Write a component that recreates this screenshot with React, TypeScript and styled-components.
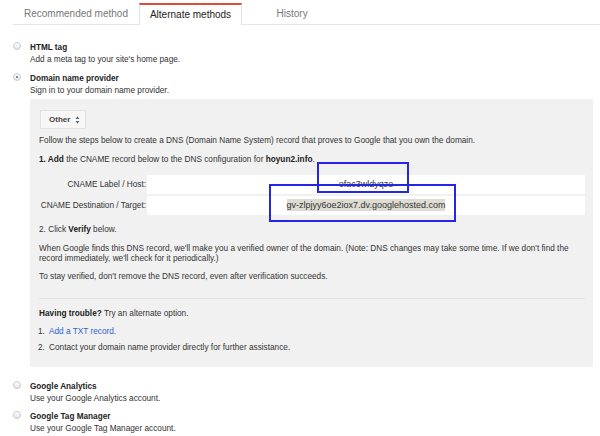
import React from "react";
import styled, { createGlobalStyle, css } from "styled-components";

const Global = createGlobalStyle`
  html, body { margin: 0; padding: 0; background: #fff; }
  body { font-family: "Liberation Sans", Arial, sans-serif; color: #222; }
  * { box-sizing: border-box; }
`;

const Page = styled.div`
  position: relative;
  width: 600px;
  height: 436px;
  overflow: hidden;
`;

const TabBar = styled.div`
  display: flex;
  margin-left: 13px;
  padding-top: 3px;
  height: 25px;
  border-bottom: 1px solid #e5e5e5;
`;

const Tab = styled.div<{ $active?: boolean }>`
  min-width: 100px;
  height: 21px;
  padding: 0 11px;
  font-size: 10px;
  line-height: 21px;
  text-align: center;
  color: #777;
  ${(p) =>
    p.$active &&
    css`
      height: 22px;
      line-height: 19px;
      padding: 0 10px;
      color: #222;
      background: #fff;
      border-top: 2px solid #dd4b39;
      border-left: 1px solid #e3e3e3;
      border-right: 1px solid #e3e3e3;
    `}
`;

const Methods = styled.div`
  padding: 0 7px 0 12px;
`;

const Method = styled.div<{ $gap: number }>`
  display: grid;
  grid-template-columns: 18px 1fr;
  margin-top: ${(p) => p.$gap}px;
`;

const Radio = styled.span<{ $checked?: boolean }>`
  position: relative;
  display: block;
  width: 8px;
  height: 8px;
  margin-left: 1px;
  border-radius: 50%;
  border: 1px solid #c9c9c9;
  background: linear-gradient(#ffffff, #e6e6e6);
  ${(p) =>
    p.$checked &&
    css`
      &::after {
        content: "";
        position: absolute;
        left: 2px;
        top: 2px;
        width: 2px;
        height: 2px;
        border-radius: 50%;
        background: #666;
      }
    `}
`;

const Title = styled.div`
  font-size: 8.2px;
  font-weight: bold;
  line-height: 12px;
  color: #222;
`;

const Desc = styled.div`
  font-size: 8.25px;
  line-height: 11px;
  color: #333;
`;

const Panel = styled.div`
  margin-top: 3px;
  background: #f1f1f1;
  padding: 9px 8px 10px 9px;
`;

const Select = styled.div`
  display: inline-flex;
  align-items: center;
  gap: 5px;
  height: 19px;
  padding: 0 5px 0 8px;
  margin-left: 1px;
  border: 1px solid #e2e2e2;
  background: #f7f7f7;
  font-size: 8px;
  font-weight: bold;
  color: #444;
`;

const Text = styled.p<{ $gap: number }>`
  margin: ${(p) => p.$gap}px 0 0;
  font-size: 8.25px;
  line-height: 10px;
  color: #333;
  b { color: #222; }
`;

const Rows = styled.div`
  margin-top: 10px;
  display: flex;
  flex-direction: column;
  gap: 2px;
`;

const Row = styled.div`
  display: grid;
  grid-template-columns: 107px 1fr;
  gap: 1px;
`;

const Label = styled.div`
  font-size: 8.25px;
  line-height: 19px;
  text-align: right;
  color: #333;
`;

const Field = styled.div`
  height: 19px;
  background: #fff;
  font-size: 9px;
  line-height: 19px;
  text-align: center;
  color: #333;
`;

const Selected = styled.span`
  background: #dedbd3;
  padding: 1px 0;
`;

const Divider = styled.div`
  margin-top: 16px;
  height: 1px;
  background: #e4e4e4;
`;

const List = styled.ol`
  list-style: none;
  margin: 5px 0 0;
  padding: 0;
`;

const Item = styled.li`
  display: grid;
  grid-template-columns: 11px 1fr;
  margin-left: -1px;
  font-size: 8.25px;
  line-height: 16.4px;
  color: #333;
`;

const Link = styled.a`
  color: #2f62d1;
  text-decoration: none;
`;

const Mark = styled.div`
  position: absolute;
  border: 2px solid #2525e6;
`;

function Arrows() {
  return (
    <svg width="5" height="8" viewBox="0 0 5 8">
      <path d="M2.5 0.5 L4.5 3 H0.5 Z" fill="#666" />
      <path d="M2.5 7.5 L4.5 5 H0.5 Z" fill="#666" />
    </svg>
  );
}

export default function App() {
  return (
    <Page>
      <Global />
      <TabBar>
        <Tab>Recommended method</Tab>
        <Tab $active>Alternate methods</Tab>
        <Tab>History</Tab>
      </TabBar>
      <Methods>
        <Method $gap={17}>
          <Radio />
          <div>
            <Title>HTML tag</Title>
            <Desc>Add a meta tag to your site's home page.</Desc>
          </div>
        </Method>
        <Method $gap={8}>
          <Radio $checked />
          <div>
            <Title>Domain name provider</Title>
            <Desc>Sign in to your domain name provider.</Desc>
            <Panel>
              <Select>
                Other <Arrows />
              </Select>
              <Text $gap={7}>
                Follow the steps below to create a DNS (Domain Name System) record that proves to Google that you own the domain.
              </Text>
              <Text $gap={9}>
                <b>1. Add</b> the CNAME record below to the DNS configuration for <b>hoyun2.info</b>.
              </Text>
              <Rows>
                <Row>
                  <Label>CNAME Label / Host:</Label>
                  <Field>ofac3wldyqze</Field>
                </Row>
                <Row>
                  <Label>CNAME Destination / Target:</Label>
                  <Field>
                    <Selected>gv-zlpjyy6oe2iox7.dv.googlehosted.com</Selected>
                  </Field>
                </Row>
              </Rows>
              <Text $gap={10}>
                2. Click <b>Verify</b> below.
              </Text>
              <Text $gap={9}>
                When Google finds this DNS record, we'll make you a verified owner of the domain. (Note: DNS changes may take some time. If we don't find the record immediately, we'll check for it periodically.)
              </Text>
              <Text $gap={8}>
                To stay verified, don't remove the DNS record, even after verification succeeds.
              </Text>
              <Divider />
              <Text $gap={10}>
                <b>Having trouble?</b> Try an alternate option.
              </Text>
              <List>
                <Item>
                  <span>1.</span>
                  <Link href="#">Add a TXT record.</Link>
                </Item>
                <Item>
                  <span>2.</span>
                  <span>Contact your domain name provider directly for further assistance.</span>
                </Item>
              </List>
            </Panel>
          </div>
        </Method>
        <Method $gap={14}>
          <Radio />
          <div>
            <Title>Google Analytics</Title>
            <Desc>Use your Google Analytics account.</Desc>
          </div>
        </Method>
        <Method $gap={7}>
          <Radio />
          <div>
            <Title>Google Tag Manager</Title>
            <Desc>Use your Google Tag Manager account.</Desc>
          </div>
        </Method>
      </Methods>
      <Mark style={{ left: 317, top: 162, width: 92, height: 31 }} />
      <Mark style={{ left: 269, top: 184, width: 187, height: 38 }} />
    </Page>
  );
}
